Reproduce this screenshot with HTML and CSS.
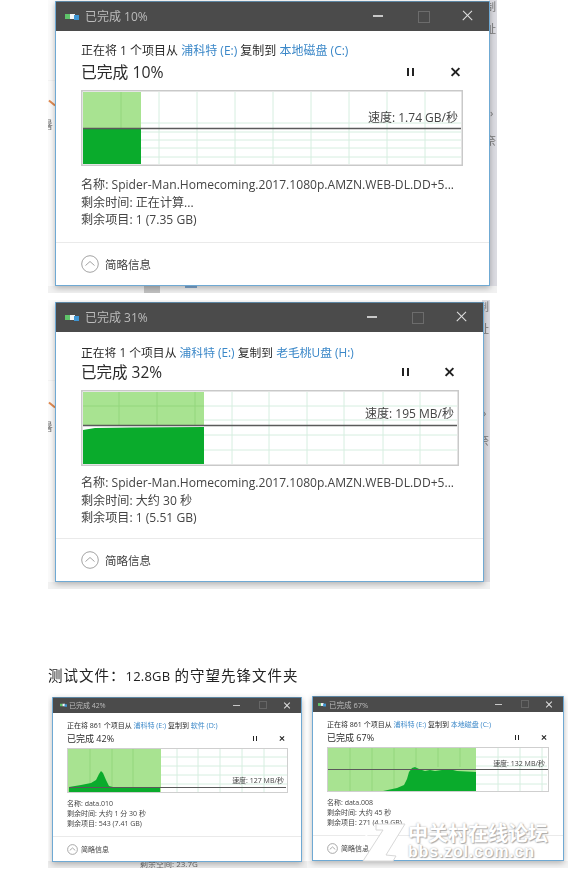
FILE: index.html
```html
<!DOCTYPE html>
<html lang="zh-CN">
<head>
<meta charset="utf-8">
<title>复制速度测试</title>
<link rel="stylesheet" href="styles.css">
</head>
<body>
<main class="page">

<section class="shot shot-a">
  <div class="left-strip"><i class="tick"></i><span class="frag">暑</span></div>
  <div class="right-strip"><span>制</span><span>址</span><span>›</span><span>奈</span></div>
  <div class="under"><i class="u-gray"></i><i class="u-blue"></i></div>
  <article class="win">
    <header class="titlebar">
      <svg class="app-icon" viewBox="0 0 14 7"><rect width="5" height="5" y="1" fill="#5fc46a"/><rect x="5" y="1" width="5" height="5" fill="#f2f6f8"/><rect x="9" y="2" width="5" height="5" fill="#3f96d4"/></svg>
      <span class="title-text">已完成 10%</span>
      <span class="ctl ctl-min"></span><span class="ctl ctl-max"></span><span class="ctl ctl-close"></span>
    </header>
    <div class="content">
      <p class="line">正在将 1 个项目从 <a>浦科特 (E:)</a> 复制到 <a>本地磁盘 (C:)</a></p>
      <div class="head-row">
        <h2 class="heading">已完成 10%</h2>
        <span class="pause"></span><span class="stop"></span>
      </div>
      <div class="graph">
        <svg width="382" height="76" viewBox="0 0 382 76">
          <rect x="2" y="2" width="58" height="36" fill="#a8e391"/>
          <g stroke="#d6eee0" stroke-width="1"><path d="M78 2V74M116 2V74M154 2V74M192 2V74M230 2V74M268 2V74M306 2V74M344 2V74M60 33H380M60 42H380M60 50H380M60 58H380M60 67H380"/></g>
          <path d="M40 2V38" stroke="#93d67d"/>
          <rect x="2" y="39" width="58" height="35" fill="#0aab2c"/>
          <path d="M2 38.500H380" stroke="#5a5a5a" stroke-width="1.500"/>
          <rect x=".75" y=".75" width="380.500" height="74.500" fill="none" stroke="#c9c9c9" stroke-width="1.500"/>
        </svg>
        <span class="speed">速度: 1.74 GB/秒</span>
      </div>
      <ul class="info">
        <li>名称: Spider-Man.Homecoming.2017.1080p.AMZN.WEB-DL.DD+5...</li>
        <li>剩余时间: 正在计算...</li>
        <li>剩余项目: 1 (7.35 GB)</li>
      </ul>
    </div>
    <footer class="foot">
      <svg class="chev" viewBox="0 0 18 18"><circle cx="9" cy="9" r="8.300" fill="none" stroke="#a3a3a3" stroke-width="1"/><path d="M4.500 10.500 9 6.500l4.500 4" fill="none" stroke="#a3a3a3" stroke-width="1"/></svg>
      <span>简略信息</span>
    </footer>
  </article>
</section>

<section class="shot shot-b">
  <div class="left-strip"><i class="tick"></i><span class="frag">暑</span></div>
  <div class="right-strip"><span>制</span><span>址</span><span>›</span><span>奈</span></div>
  <div class="under"></div>
  <article class="win">
    <header class="titlebar">
      <svg class="app-icon" viewBox="0 0 14 7"><rect width="5" height="5" y="1" fill="#5fc46a"/><rect x="5" y="1" width="5" height="5" fill="#f2f6f8"/><rect x="9" y="2" width="5" height="5" fill="#3f96d4"/></svg>
      <span class="title-text">已完成 31%</span>
      <span class="ctl ctl-min"></span><span class="ctl ctl-max"></span><span class="ctl ctl-close"></span>
    </header>
    <div class="content">
      <p class="line">正在将 1 个项目从 <a>浦科特 (E:)</a> 复制到 <a>老毛桃U盘 (H:)</a></p>
      <div class="head-row">
        <h2 class="heading">已完成 32%</h2>
        <span class="pause"></span><span class="stop"></span>
      </div>
      <div class="graph">
        <svg width="378" height="76" viewBox="0 0 378 76">
          <rect x="2" y="2" width="121" height="33" fill="#a8e391"/>
          <g stroke="#d6eee0" stroke-width="1"><path d="M151 2V74M188 2V74M226 2V74M263 2V74M302 2V74M339 2V74M123 16H376M123 30H376M123 45H376M123 60H376"/></g>
          <path d="M38 2V35M76 2V35M114 2V35M2 16H123" stroke="#93d67d"/>
          <path d="M2 40 14 38 50 37.500 123 37V74H2Z" fill="#0aab2c"/>
          <path d="M2 35.500H376" stroke="#5a5a5a" stroke-width="1.500"/>
          <rect x=".75" y=".75" width="376.500" height="74.500" fill="none" stroke="#c9c9c9" stroke-width="1.500"/>
        </svg>
        <span class="speed">速度: 195 MB/秒</span>
      </div>
      <ul class="info">
        <li>名称: Spider-Man.Homecoming.2017.1080p.AMZN.WEB-DL.DD+5...</li>
        <li>剩余时间: 大约 30 秒</li>
        <li>剩余项目: 1 (5.51 GB)</li>
      </ul>
    </div>
    <footer class="foot">
      <svg class="chev" viewBox="0 0 18 18"><circle cx="9" cy="9" r="8.300" fill="none" stroke="#a3a3a3" stroke-width="1"/><path d="M4.500 10.500 9 6.500l4.500 4" fill="none" stroke="#a3a3a3" stroke-width="1"/></svg>
      <span>简略信息</span>
    </footer>
  </article>
</section>

<p class="caption">测试文件：<b>12.8GB</b> 的守望先锋文件夹</p>

<section class="shot shot-c small">
  <div class="under"><span class="under-text">剩余空间: 23.7G</span></div>
  <article class="win">
    <header class="titlebar">
      <svg class="app-icon" viewBox="0 0 14 7"><rect width="5" height="5" y="1" fill="#5fc46a"/><rect x="5" y="1" width="5" height="5" fill="#f2f6f8"/><rect x="9" y="2" width="5" height="5" fill="#3f96d4"/></svg>
      <span class="title-text">已完成 42%</span>
      <span class="ctl ctl-min"></span><span class="ctl ctl-max"></span><span class="ctl ctl-close"></span>
    </header>
    <div class="content">
      <p class="line">正在将 861 个项目从 <a>浦科特 (E:)</a> 复制到 <a>软件 (D:)</a></p>
      <div class="head-row">
        <h2 class="heading">已完成 42%</h2>
        <span class="pause"></span><span class="stop"></span>
      </div>
      <div class="graph">
        <svg width="221" height="45" viewBox="0 0 221 45">
          <rect x="1" y="1" width="93" height="43" fill="#a8e391"/>
          <g stroke="#d6eee0" stroke-width="1"><path d="M110 1V44M131 1V44M153 1V44M175 1V44M197 1V44M94 9H220M94 18H220M94 27H220M94 36H220"/></g>
          <path d="M23 1V40M45 1V40M66 1V40" stroke="#93d67d"/>
          <path d="M2 39 14 37 24 35 29 32 32 26 34 23 36 25 39 32 42 38 46 39 93 39.500V44H2Z" fill="#0aab2c"/>
          <path d="M2 39.500H219" stroke="#5a5a5a" stroke-width="1"/>
          <rect x=".5" y=".5" width="220" height="44" fill="none" stroke="#cfcfcf" stroke-width="1"/>
        </svg>
        <span class="speed">速度: 127 MB/秒</span>
      </div>
      <ul class="info">
        <li>名称: data.010</li>
        <li>剩余时间: 大约 1 分 30 秒</li>
        <li>剩余项目: 543 (7.41 GB)</li>
      </ul>
    </div>
    <footer class="foot">
      <svg class="chev" viewBox="0 0 18 18"><circle cx="9" cy="9" r="8" fill="none" stroke="#9a9a9a" stroke-width="1.400"/><path d="M4.500 10.500 9 6.500l4.500 4" fill="none" stroke="#9a9a9a" stroke-width="1.400"/></svg>
      <span>简略信息</span>
    </footer>
  </article>
</section>

<section class="shot shot-d small">
  <div class="under"></div>
  <article class="win">
    <header class="titlebar">
      <svg class="app-icon" viewBox="0 0 14 7"><rect width="5" height="5" y="1" fill="#5fc46a"/><rect x="5" y="1" width="5" height="5" fill="#f2f6f8"/><rect x="9" y="2" width="5" height="5" fill="#3f96d4"/></svg>
      <span class="title-text">已完成 67%</span>
      <span class="ctl ctl-min"></span><span class="ctl ctl-max"></span><span class="ctl ctl-close"></span>
    </header>
    <div class="content">
      <p class="line">正在将 861 个项目从 <a>浦科特 (E:)</a> 复制到 <a>本地磁盘 (C:)</a></p>
      <div class="head-row">
        <h2 class="heading">已完成 67%</h2>
        <span class="pause"></span><span class="stop"></span>
      </div>
      <div class="graph">
        <svg width="222" height="45" viewBox="0 0 222 45">
          <rect x="1" y="1" width="148" height="43" fill="#a8e391"/>
          <g stroke="#d6eee0" stroke-width="1"><path d="M171 1V44M193 1V44M215 1V44M149 10H220M149 19H220M149 28H220M149 37H220"/></g>
          <path d="M23 1V44M45 1V44M67 1V44M89 1V20M111 1V20M133 1V20" stroke="#93d67d"/>
          <path d="M56 44 70 41 77 38 80 32 82 25 85 21 88 20 92 22 98 24 103 23 108 24 115 23 122 22 130 24 149 25V44Z" fill="#0aab2c"/>
          <path d="M1 22.500H221" stroke="#5a5a5a" stroke-width="1"/>
          <rect x=".5" y=".5" width="221" height="44" fill="none" stroke="#cfcfcf" stroke-width="1"/>
        </svg>
        <span class="speed">速度: 132 MB/秒</span>
      </div>
      <ul class="info">
        <li>名称: data.008</li>
        <li>剩余时间: 大约 45 秒</li>
        <li>剩余项目: 271 (4.19 GB)</li>
      </ul>
    </div>
    <footer class="foot">
      <svg class="chev" viewBox="0 0 18 18"><circle cx="9" cy="9" r="8" fill="none" stroke="#9a9a9a" stroke-width="1.400"/><path d="M4.500 10.500 9 6.500l4.500 4" fill="none" stroke="#9a9a9a" stroke-width="1.400"/></svg>
      <span>简略信息</span>
    </footer>
  </article>
</section>

<aside class="watermark">
  <svg class="wm-logo" viewBox="0 0 44 40"><path d="M14 2H43L24 33l10 1-3 5H1L21 8H14Z" fill="#fff" stroke="#d8d8d8" stroke-width="1"/><path d="M2 26C2 16 6 8 12 4" fill="none" stroke="#fff" stroke-width="2"/></svg>
  <div class="wm-text">
    <span class="wm-cn">中关村在线论坛</span>
    <span class="wm-en">bbs.zol.com.cn</span>
  </div>
</aside>

</main>
</body>
</html>
```

FILE: styles.css
```css
* { box-sizing: border-box; }
html, body { margin: 0; padding: 0; background: #fff; }
.page {
  position: relative;
  width: 570px;
  height: 885px;
  overflow: hidden;
  font-family: "Open Sans", "Noto Sans CJK SC", sans-serif;
  color: #333;
}

/* Each screenshot sits at its own place on the white canvas */
.shot { position: absolute; overflow: hidden; filter: blur(.4px); background: #fff; }
.shot-a { left: 48px; top: 0; width: 449px; height: 293px; }
.shot-b { left: 48px; top: 300px; width: 442px; height: 289px; }
.shot-c { left: 48px; top: 693px; width: 259px; height: 175px; }
.shot-d { left: 307px; top: 691px; width: 261px; height: 177px; }

.win {
  position: absolute;
  display: flex;
  flex-direction: column;
  background: #fff;
  border: 1px solid #6fa9d3;
  border-top-width: 0;
  box-shadow: 0 2px 6px rgba(0, 0, 0, .28);
}
.shot-a .win { left: 7px; top: 1px; width: 435px; height: 285px; }
.shot-b .win { left: 7px; top: 2px; width: 429px; height: 280px; }
.shot-c .win { left: 4px; top: 4px; width: 250px; height: 165px; }
.shot-d .win { left: 5px; top: 5px; width: 252px; height: 165px; }

/* backdrop fragments */
.left-strip, .right-strip {
  position: absolute;
  top: 0;
  bottom: 7px;
  width: 8px;
  overflow: hidden;
  font-size: 11px;
  color: #777;
}
.left-strip {
  left: 0;
  background: linear-gradient(#f3f3f3, #f3f3f3) 0 80px / 100% 1px no-repeat, #fbfbfb;
}
.tick {
  display: block;
  width: 8px;
  height: 2px;
  margin-top: 102px;
  background: #e08a50;
  transform: rotate(40deg);
}
.frag { display: block; margin: 14px 0 0 -6px; line-height: 14px; }
.right-strip {
  right: 0;
  display: flex;
  flex-direction: column;
  gap: 8px;
  background: #dcdce2;
}
.shot-b .left-strip .tick { margin-top: 104px; }
.right-strip span { display: block; margin-left: -4px; line-height: 14px; }
.right-strip span:nth-child(3) { margin: 62px 0 0 1px; }
.right-strip span:nth-child(4) { margin-top: 6px; }
.under {
  position: absolute;
  left: 0;
  right: 0;
  bottom: 0;
  height: 7px;
  background: #f1f1f1;
}
.u-gray { position: absolute; left: 96px; top: 0; width: 16px; height: 7px; background: #c2c2c2; }
.u-blue { position: absolute; left: 137px; top: 0; width: 12px; height: 2px; background: #7fa8d0; }
.small .under { background: #eeeeee; }
.under-text { position: absolute; left: 92px; top: -3px; font-size: 8px; color: #666; }
.shot-d .under { background: #f4f4f4; }

/* title bar */
.titlebar {
  display: flex;
  align-items: center;
  flex: none;
  height: 30px;
  padding-left: 9px;
  background: #4b4b4b;
  box-shadow: inset 0 1px 0 #5d86a3;
  color: #bcbcbc;
  font-size: 12px;
}
.app-icon { width: 14px; height: 7px; margin-right: 6px; flex: none; }
.title-text { flex: 1; }
.ctl { position: relative; flex: none; width: 44.500px; height: 100%; }
.ctl-min::before {
  content: "";
  position: absolute;
  left: 17px;
  top: 14px;
  width: 10px;
  height: 1.500px;
  background: #c8c8c8;
}
.ctl-max::before {
  content: "";
  position: absolute;
  left: 17.500px;
  top: 10px;
  width: 10px;
  height: 10px;
  border: 1px solid #6c6c6c;
}
.ctl-close::before, .ctl-close::after {
  content: "";
  position: absolute;
  left: 16px;
  top: 14px;
  width: 13px;
  height: 1.400px;
  background: #e2e2e2;
  transform: rotate(45deg);
}
.ctl-close::after { transform: rotate(-45deg); }

/* dialog body */
.content { flex: 1; padding: 12px 0 0 25px; }
.line { margin: 0; font-size: 12px; line-height: 16px; color: #2b2b2b; white-space: nowrap; }
.line a { color: #3a87c8; }
.head-row { display: flex; align-items: center; height: 26px; margin-bottom: 5px; }
.heading { flex: 1; margin: 0; font-size: 15.800px; font-weight: 400; line-height: 26px; color: #2b2b2b; }
.pause {
  flex: none;
  width: 7px;
  height: 8px;
  border-left: 2.500px solid #222;
  border-right: 2.500px solid #222;
  margin-right: 37px;
}
.stop { position: relative; flex: none; width: 9px; height: 9px; margin-right: 29px; }
.stop::before, .stop::after {
  content: "";
  position: absolute;
  left: -1px;
  top: 3.500px;
  width: 11px;
  height: 2px;
  background: #222;
  transform: rotate(45deg);
}
.stop::after { transform: rotate(-45deg); }

.graph { position: relative; width: fit-content; }
.graph svg { display: block; }
.speed {
  position: absolute;
  right: 5px;
  top: 18px;
  font-size: 12px;
  line-height: 20px;
  color: #444;
  white-space: nowrap;
}
.info { margin: 10px 0 0; padding: 0; list-style: none; font-size: 12.100px; line-height: 17.500px; color: #444; white-space: nowrap; }

.foot {
  display: flex;
  align-items: center;
  flex: none;
  gap: 6px;
  height: 43px;
  padding-left: 25px;
  border-top: 1px solid #eaeaea;
  font-size: 11.500px;
  color: #444;
}
.chev { width: 18px; height: 18px; flex: none; }

/* second window: 378px graph */
.shot-b .line { font-size: 11.800px; }
.shot-b .head-row { height: 24px; margin-bottom: 6px; }
.shot-b .heading { font-size: 15.500px; line-height: 24px; }
.shot-b .pause { margin-right: 36px; }
.shot-b .stop { margin-right: 29px; }
.shot-b .speed { right: 5px; top: 14px; }
.shot-b .info { margin-top: 8px; }

/* the two small windows */
.small .titlebar { height: 16px; padding-left: 7px; font-size: 7px; }
.small .app-icon { width: 7px; height: 4px; margin-right: 2px; }
.shot-d .titlebar { padding-left: 5px; font-size: 7.500px; }
.shot-d .app-icon { width: 8px; height: 5px; margin-right: 3px; }
.small .ctl { width: 25.500px; }
.small .ctl-min::before { left: 8px; top: 7.500px; width: 7px; height: 1px; }
.small .ctl-max::before { left: 9px; top: 4px; width: 6px; height: 6px; border-color: #666; }
.small .ctl-close::before, .small .ctl-close::after { left: 7px; top: 7.500px; width: 8px; height: 1px; }
.small .content { padding: 8px 0 0 14px; }
.small .line { font-size: 7px; line-height: 10px; }
.small .head-row { height: 15px; margin-bottom: 2px; }
.small .heading { font-size: 9px; line-height: 15px; }
.small .pause { width: 4px; height: 5px; border-left-width: 1.300px; border-right-width: 1.300px; margin-right: 22px; }
.small .stop { width: 5px; height: 5px; margin-right: 17px; }
.small .stop::before, .small .stop::after { left: -.5px; top: 2px; width: 6px; height: 1.200px; }
.small .speed { right: 4px; top: 28px; font-size: 7px; line-height: 10px; }
.shot-d .speed { top: 12px; }
.small .info { margin-top: 6px; font-size: 7px; line-height: 10px; }
.small .foot { height: 25px; gap: 3px; padding-left: 14px; font-size: 7px; }
.small .chev { width: 11px; height: 11px; }

.caption {
  position: absolute;
  left: 48px;
  top: 664px;
  margin: 0;
  font-family: "Noto Sans CJK SC", sans-serif;
  font-size: 14.500px;
  line-height: 22px;
  letter-spacing: 1px;
  color: #222;
  white-space: nowrap;
  filter: blur(.25px);
}
.caption b { font-family: "Open Sans", sans-serif; font-size: 13px; font-weight: 400; letter-spacing: .2px; }

/* site watermark lies over the last screenshot */
.watermark {
  position: absolute;
  left: 362px;
  top: 821px;
  display: flex;
  gap: 2px;
}
.wm-logo { width: 44px; height: 40px; flex: none; margin-top: 1px; }
.wm-text { display: flex; flex-direction: column; }
.wm-cn {
  font-family: "Noto Sans CJK SC", sans-serif;
  font-size: 20px;
  font-weight: 700;
  line-height: 23px;
  color: #fff;
  text-shadow: 0 0 2px #aaa, 1px 1px 1px #aaa;
  white-space: nowrap;
}
.wm-en {
  font-family: "Liberation Sans", sans-serif;
  font-size: 16px;
  font-weight: 700;
  line-height: 16px;
  letter-spacing: .8px;
  color: #fff;
  text-shadow: 0 0 2px #aaa, 1px 1px 1px #aaa;
  white-space: nowrap;
}
```
